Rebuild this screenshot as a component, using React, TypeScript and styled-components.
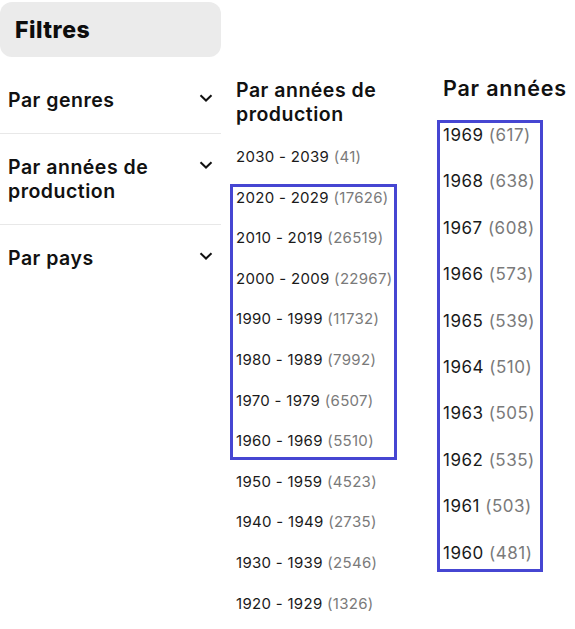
import React from "react";
import styled, { createGlobalStyle } from "styled-components";

const Global = createGlobalStyle`
  html, body { margin: 0; padding: 0; background: #fff; }
  body { font-family: Inter, "Open Sans", sans-serif; color: #1a1a1a; }
  *, *::before, *::after { box-sizing: border-box; }
`;

const Page = styled.div`
  display: flex;
  align-items: flex-start;
  padding-top: 2px;
  width: 575px;
`;

const Sidebar = styled.aside`
  width: 221px;
  flex: none;
  display: flex;
  flex-direction: column;
`;

const FilterHeader = styled.div`
  height: 55px;
  background: #ebebeb;
  border-radius: 12px;
  display: flex;
  align-items: center;
  padding: 0 15px;
  margin-bottom: 10px;
`;

const HeaderTitle = styled.h2`
  margin: 0;
  font-size: 23px;
  font-weight: 800;
  letter-spacing: 0.5px;
  color: #0d0d0d;
`;

const FilterItem = styled.div`
  display: flex;
  align-items: flex-start;
  justify-content: space-between;
  padding: 21px 8px;
  border-bottom: 1px solid #e8e8e8;
  &:last-child { border-bottom: none; }
`;

const FilterLabel = styled.span`
  font-size: 19.5px;
  font-weight: 600;
  letter-spacing: 0.5px;
  line-height: 24px;
  color: #111;
`;

const ChevronBox = styled.span`
  display: flex;
  align-items: center;
  height: 24px;
  margin-top: -2px;
`;

const Chevron = () => (
  <ChevronBox>
    <svg width="14" height="8" viewBox="0 0 14 8" fill="none">
      <path d="M1.5 1.2 L7 6.5 L12.5 1.2" stroke="#111" strokeWidth="2" />
    </svg>
  </ChevronBox>
);

const Column = styled.section<{ $top: number; $left: number; $width?: number }>`
  flex: none;
  margin-top: ${(p) => p.$top}px;
  margin-left: ${(p) => p.$left}px;
  width: ${(p) => (p.$width ? `${p.$width}px` : "auto")};
  display: flex;
  flex-direction: column;
`;

const ColumnTitle = styled.h3<{ $size: number; $gap: number; $ls: number }>`
  margin: 0 0 ${(p) => p.$gap}px;
  font-size: ${(p) => p.$size}px;
  letter-spacing: ${(p) => p.$ls}px;
  font-weight: 600;
  line-height: 24px;
  color: #111;
`;

const List = styled.div<{ $gap: number }>`
  display: flex;
  flex-direction: column;
  gap: ${(p) => p.$gap}px;
`;

const Highlight = styled.div<{ $gap: number; $top: number; $bottom: number; $w: number }>`
  position: relative;
  display: flex;
  flex-direction: column;
  gap: ${(p) => p.$gap}px;
  &::after {
    content: "";
    position: absolute;
    left: -6px;
    top: -${(p) => p.$top}px;
    bottom: -${(p) => p.$bottom}px;
    width: ${(p) => p.$w}px;
    border: 3px solid #4646d2;
    pointer-events: none;
  }
`;

const Item = styled.div<{ $size: number; $lh: number; $ls: number }>`
  font-size: ${(p) => p.$size}px;
  line-height: ${(p) => p.$lh}px;
  letter-spacing: ${(p) => p.$ls}px;
  color: #1a1a1a;
  white-space: nowrap;
`;

const Count = styled.span`
  color: #7a7a7a;
`;

const decades = [
  ["2030 - 2039", "41"],
  ["2020 - 2029", "17626"],
  ["2010 - 2019", "26519"],
  ["2000 - 2009", "22967"],
  ["1990 - 1999", "11732"],
  ["1980 - 1989", "7992"],
  ["1970 - 1979", "6507"],
  ["1960 - 1969", "5510"],
  ["1950 - 1959", "4523"],
  ["1940 - 1949", "2735"],
  ["1930 - 1939", "2546"],
  ["1920 - 1929", "1326"],
];

const years = [
  ["1969", "617"],
  ["1968", "638"],
  ["1967", "608"],
  ["1966", "573"],
  ["1965", "539"],
  ["1964", "510"],
  ["1963", "505"],
  ["1962", "535"],
  ["1961", "503"],
  ["1960", "481"],
];

const D_GAP = 20.6;
const Y_GAP = 24.4;

const Decade = ({ d }: { d: string[] }) => (
  <Item $size={15} $lh={20} $ls={0.3}>
    {d[0]} <Count>({d[1]})</Count>
  </Item>
);

const Year = ({ d }: { d: string[] }) => (
  <Item $size={17} $lh={22} $ls={0.5}>
    {d[0]} <Count>({d[1]})</Count>
  </Item>
);

export default function App() {
  return (
    <>
      <Global />
      <Page>
        <Sidebar>
          <FilterHeader>
            <HeaderTitle>Filtres</HeaderTitle>
          </FilterHeader>
          <FilterItem>
            <FilterLabel>Par genres</FilterLabel>
            <Chevron />
          </FilterItem>
          <FilterItem>
            <FilterLabel>
              Par années de
              <br />
              production
            </FilterLabel>
            <Chevron />
          </FilterItem>
          <FilterItem>
            <FilterLabel>Par pays</FilterLabel>
            <Chevron />
          </FilterItem>
        </Sidebar>

        <Column $top={76} $left={15} $width={207}>
          <ColumnTitle $size={19.5} $gap={21} $ls={0.5}>
            Par années de
            <br />
            production
          </ColumnTitle>
          <List $gap={D_GAP}>
            <Decade d={decades[0]} />
            <Highlight $gap={D_GAP} $top={4} $bottom={9} $w={167}>
              {decades.slice(1, 8).map((d) => (
                <Decade key={d[0]} d={d} />
              ))}
            </Highlight>
            {decades.slice(8).map((d) => (
              <Decade key={d[0]} d={d} />
            ))}
          </List>
        </Column>

        <Column $top={74} $left={0}>
          <ColumnTitle $size={21.5} $gap={24} $ls={0.8}>
            Par années
          </ColumnTitle>
          <Highlight $gap={Y_GAP} $top={4} $bottom={8} $w={106}>
            {years.map((d) => (
              <Year key={d[0]} d={d} />
            ))}
          </Highlight>
        </Column>
      </Page>
    </>
  );
}
